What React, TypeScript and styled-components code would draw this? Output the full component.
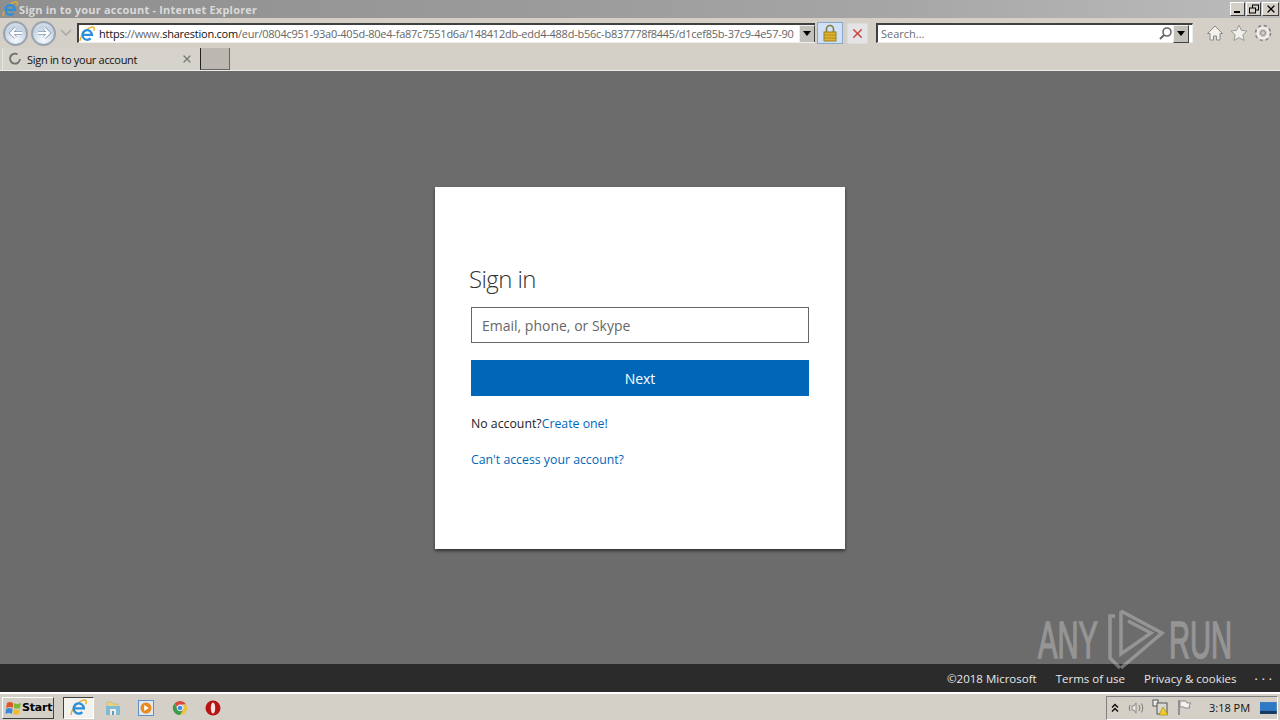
import React from 'react';
import styled, { createGlobalStyle } from 'styled-components';
import { X } from 'lucide-react';

const GlobalStyle = createGlobalStyle`
  html, body { margin: 0; padding: 0; width: 1280px; height: 720px; overflow: hidden; }
  body { font-family: "Open Sans", "Liberation Sans", sans-serif; }
`;

const Screen = styled.div`
  position: relative;
  display: flex;
  flex-direction: column;
  width: 1280px;
  height: 720px;
  background: #d4d0c8;
`;

const TitleBar = styled.div`
  display: flex;
  align-items: center;
  height: 18px;
  padding: 0 1px 0 2px;
  background: linear-gradient(90deg, #8f8f8f 0%, #9a9a9a 40%, #a6a6a6 70%, #bcbcbc 100%);
`;

const TitleText = styled.span`
  margin-left: 1px;
  flex: 1;
  font: bold 11px "Open Sans", sans-serif;
  letter-spacing: 0.2px;
  color: #dadada;
  white-space: nowrap;
`;

const WindowButton = styled.div<{ $wide?: boolean }>`
  display: flex;
  align-items: center;
  justify-content: center;
  box-sizing: border-box;
  width: ${p => (p.$wide ? 17 : 15)}px;
  height: 14px;
  margin-left: 1px;
  background: #d4d0c8;
  border: 1px solid;
  border-color: #fff #404040 #404040 #fff;
`;

const AddressRow = styled.div`
  display: flex;
  align-items: center;
  height: 30px;
  background: #d4d0c8;
  padding-left: 3px;
`;

const NavButton = styled.div`
  display: flex;
  align-items: center;
  justify-content: center;
  box-sizing: border-box;
  width: 25px;
  height: 25px;
  margin-right: 3px;
  border-radius: 50%;
  border: 2px solid #9aa4b0;
  background: radial-gradient(circle at 50% 80%, #f6fafd 0%, #c4d2e2 65%, #e6ebf1 100%);
`;

const NavChevron = styled.svg`
  margin-left: 1px;
`;

const AddressBox = styled.div`
  display: flex;
  align-items: center;
  box-sizing: border-box;
  width: 738px;
  height: 20px;
  margin-left: 5px;
  background: #fff;
  border-top: 2px solid #404040;
  border-left: 2px solid #404040;
  border-bottom: 1px solid #eee;
  overflow: hidden;
`;

const Url = styled.div`
  margin-left: 4px;
  flex: 1;
  font: 11px "Open Sans", sans-serif;
  letter-spacing: -0.235px;
  color: #666;
  white-space: nowrap;
  overflow: hidden;
`;

const UrlStrong = styled.span`
  color: #111;
`;

const Dropdown = styled.div`
  display: flex;
  align-items: center;
  justify-content: center;
  box-sizing: border-box;
  flex: none;
  width: 16px;
  height: 18px;
  background: #c4c0ba;
  border: 1px solid;
  border-color: #eee #404040 #404040 #eee;

  &::after {
    content: '';
    border-left: 4px solid transparent;
    border-right: 4px solid transparent;
    border-top: 5px solid #000;
  }
`;

const LockButton = styled.div`
  display: flex;
  align-items: center;
  justify-content: center;
  box-sizing: border-box;
  width: 26px;
  height: 22px;
  margin-left: 2px;
  background: #cfe0f7;
  border: 1px solid #8aa8cc;
`;

const StopButton = styled.div`
  display: flex;
  align-items: center;
  justify-content: center;
  box-sizing: border-box;
  width: 21px;
  height: 21px;
  margin-left: 4px;
  border-radius: 2px;
  background: #e6e3e6;
  border: 1px solid #ddd;
`;

const SearchBox = styled.div`
  display: flex;
  align-items: center;
  box-sizing: border-box;
  width: 317px;
  height: 20px;
  margin-left: 8px;
  padding: 0 3px 0 3px;
  background: #fff;
  border-top: 2px solid #404040;
  border-left: 2px solid #404040;
  border-bottom: 1px solid #eee;
  border-right: 1px solid #eee;
`;

const SearchText = styled.span`
  flex: 1;
  font: 11px "Open Sans", sans-serif;
  color: #6d6d6d;
`;

const ToolIcons = styled.div`
  display: flex;
  align-items: center;
  gap: 6px;
  margin-left: 13px;
`;

const TabRow = styled.div`
  display: flex;
  align-items: stretch;
  height: 23px;
  box-sizing: border-box;
  padding-left: 2px;
  background: #d4d0c8;
  border-bottom: 1px solid #eeeae4;
`;

const Tab = styled.div`
  display: flex;
  align-items: center;
  box-sizing: border-box;
  width: 198px;
  padding: 0 7px 0 5px;
  background: #d6d2cc;
  border-left: 1px solid #e8e6e0;
`;

const TabLabel = styled.span`
  flex: 1;
  margin-left: 5px;
  font: 11px "Open Sans", sans-serif;
  letter-spacing: -0.3px;
  color: #111;
  white-space: nowrap;
`;

const NewTab = styled.div`
  box-sizing: border-box;
  width: 30px;
  height: 22px;
  background: #bdb7b2;
  border: 1px solid #333;
  border-top: none;
  border-left-color: #222;
  border-right-color: #666;
  border-bottom-color: #666;
`;

const Page = styled.main`
  flex: 1;
  display: flex;
  align-items: center;
  justify-content: center;
  padding-top: 1px;
  background: #6c6c6c;
`;

const Card = styled.section`
  box-sizing: border-box;
  width: 410px;
  height: 362px;
  padding: 75px 36px 0;
  background: #fff;
  box-shadow: 0 2px 3px rgba(0, 0, 0, 0.55);
`;

const Heading = styled.h1`
  margin: 0 0 11px -2px;
  height: 34px;
  font: 300 24px/34px "Open Sans", sans-serif;
  letter-spacing: -0.6px;
  color: #333;
`;

const FakeInput = styled.div`
  display: flex;
  align-items: center;
  box-sizing: border-box;
  height: 36px;
  padding-left: 10px;
  border: 1px solid #666;
  font-size: 14px;
  color: #666;
`;

const NextButton = styled.div`
  display: flex;
  align-items: center;
  justify-content: center;
  height: 36px;
  margin-top: 17px;
  background: #0067b8;
  color: #fff;
  font-size: 14px;
`;

const Line = styled.div<{ $top: number }>`
  margin-top: ${p => p.$top}px;
  height: 18px;
  font-size: 12.3px;
  line-height: 18px;
  color: #222;
  white-space: nowrap;
`;

const Link = styled.span`
  color: #0067b8;
`;

const Footer = styled.footer`
  display: flex;
  align-items: center;
  justify-content: flex-end;
  height: 28px;
  padding-right: 4px;
  background: #2b2b2b;
  color: #e8e8e8;
  font-size: 11.5px;
`;

const FooterItem = styled.span`
  margin-left: 19px;
  white-space: nowrap;
`;

const FooterMore = styled.span`
  margin-left: 18px;
  letter-spacing: 4px;
  font-weight: 600;
  transform: translateY(-3px);
`;

const Taskbar = styled.div`
  display: flex;
  align-items: center;
  box-sizing: border-box;
  height: 28px;
  padding: 2px 0 0 2px;
  border-top: 1px solid #fff;
  background: #d4d0c8;
  box-shadow: inset 0 1px 0 #fff;
`;

const StartButton = styled.div`
  display: flex;
  align-items: center;
  box-sizing: border-box;
  width: 52px;
  height: 22px;
  padding-left: 2px;
  background: #d4d0c8;
  border: 1px solid;
  border-color: #fff #404040 #404040 #fff;
  font: bold 11px "DejaVu Sans", sans-serif;
  letter-spacing: -0.2px;
  color: #000;
`;

const ActiveTask = styled.div`
  display: flex;
  align-items: center;
  justify-content: center;
  box-sizing: border-box;
  width: 31px;
  height: 22px;
  margin: 0 2px 0 9px;
  background: #f4f2ee;
  border: 1px solid;
  border-color: #404040 #fff #fff #404040;
`;

const TaskIcon = styled.div`
  display: flex;
  align-items: center;
  justify-content: center;
  width: 33.5px;
  height: 22px;
`;

const Tray = styled.div`
  display: flex;
  align-items: center;
  box-sizing: border-box;
  height: 24px;
  width: 172px;
  margin-left: auto;
  margin-right: 2px;
  padding-left: 3px;
  border: 1px solid;
  border-color: #808080 #fff #fff #808080;
`;

const TrayIcons = styled.div`
  display: flex;
  align-items: center;
  gap: 8px;
`;

const Clock = styled.span`
  margin-left: 16px;
  width: 52px;
  font: 11px "Open Sans", sans-serif;
  color: #111;
`;

const Watermark = styled.div`
  position: absolute;
  right: 50px;
  bottom: 48px;
  display: flex;
  align-items: center;
  height: 64px;
  color: #c8c8c8;
  opacity: 0.45;
  pointer-events: none;
`;

const WatermarkWord = styled.span`
  display: inline-block;
  width: 61px;
  font: 52px/64px "Liberation Sans", sans-serif;
  -webkit-text-stroke: 1.5px #c8c8c8;
  transform: scaleX(0.56);
  transform-origin: left center;
  white-space: nowrap;
`;

const WatermarkLogo = styled.svg`
  margin: 0 2px 0 8px;
`;

const IeIcon = ({ size = 16 }: { size?: number }) => (
  <svg width={size} height={size} viewBox="0 0 16 16" fill="none">
    <path d="M1 15C1.5 9 8 1.5 14 .8c1.6 0 1.6 2.2 .8 4" stroke="#e8b020" strokeWidth="1.3" />
    <path d="M4.4 8.8H13A4.8 4.8 0 1 0 11.6 12.4" stroke="#2a8fdc" strokeWidth="2.2" />
  </svg>
);

const NavArrow = ({ back }: { back?: boolean }) => (
  <svg width="16" height="14" viewBox="0 0 16 14" fill="none" style={back ? undefined : { transform: 'scaleX(-1)' }}>
    <path d="M14 7H3M7.5 2.5L3 7l4.5 4.5" stroke="#8a9db2" strokeWidth="3.6" />
    <path d="M14 7H3M7.5 2.5L3 7l4.5 4.5" stroke="#fff" strokeWidth="2" />
  </svg>
);

const Lock = () => (
  <svg width="16" height="18" viewBox="0 0 16 18" fill="none">
    <path d="M4.5 8V5a3.5 3.5 0 0 1 7 0v3" stroke="#8a7a38" strokeWidth="1.6" />
    <rect x="2" y="8" width="12" height="9" fill="#e0b52c" stroke="#9a7d20" />
    <path d="M2 11h12M2 14h12" stroke="#a98a26" />
  </svg>
);

const Search = () => (
  <svg width="15" height="15" viewBox="0 0 15 15" fill="none">
    <circle cx="9" cy="6" r="4" stroke="#666" strokeWidth="1.6" />
    <path d="M6 9l-4 4" stroke="#666" strokeWidth="2" />
  </svg>
);

const Home = () => (
  <svg width="18" height="18" viewBox="0 0 18 18">
    <path d="M9 2L1.5 9.5h2.500V16h3.500v-4h3v4H14V9.500h2.500z" fill="#f2f0ec" stroke="#8a8a86" />
  </svg>
);

const Star = () => (
  <svg width="18" height="18" viewBox="0 0 18 18">
    <path d="M9 1l2.4 5.4 5.6.6-4.2 3.8 1.2 5.7L9 13.7l-5 2.8 1.2-5.7L1 7l5.6-.6z" fill="#f2f0ec" stroke="#9a9a96" />
  </svg>
);

const Gear = () => (
  <svg width="18" height="18" viewBox="0 0 18 18" fill="none">
    <circle cx="9" cy="9" r="6.5" stroke="#8a8a86" strokeWidth="3.6" strokeDasharray="2.6 2.5" />
    <circle cx="9" cy="9" r="5.4" stroke="#f2f0ec" strokeWidth="2.4" />
    <circle cx="9" cy="9" r="2.4" stroke="#8a8a86" />
  </svg>
);

const Spinner = () => (
  <svg width="14" height="14" viewBox="0 0 14 14" fill="none">
    <path d="M9.5 2.3A5 5 0 1 0 12 7" stroke="#6f6f6f" strokeWidth="1.8" />
  </svg>
);

const WinFlag = () => (
  <svg width="17" height="16" viewBox="0 0 17 16">
    <path d="M2 3c2-1.4 4-1.4 6 0v5C6 6.6 4 6.6 1 8z" fill="#e0562a" />
    <path d="M9 3c2 1.2 4 1.2 7 0l-1 5c-2 1-4 1-6 0z" fill="#7cb83a" />
    <path d="M1 9c2-1.4 4-1.4 6.6 0l-.6 5c-2-1.4-4-1.4-6.5 0z" fill="#3a86d8" />
    <path d="M9 9c2 1.2 4 1.2 6 0l-1 5c-2 1-3.6 1-5.6 0z" fill="#eebb2c" />
  </svg>
);

const Folder = () => (
  <svg width="16" height="16" viewBox="0 0 16 16">
    <path d="M2 2h5l1 2h5v3H2z" fill="#e6d27e" stroke="#b8a868" strokeWidth=".5" />
    <rect x="1" y="6" width="14" height="9" fill="#7fbad6" />
    <rect x="5" y="9" width="6" height="6" fill="#f0ece0" />
    <rect x="7" y="11" width="2" height="4" fill="#5f9cbc" />
  </svg>
);

const Media = () => (
  <svg width="16" height="16" viewBox="0 0 16 16">
    <rect x=".5" y=".5" width="15" height="15" fill="#dfe8f2" stroke="#5f8fc4" />
    <circle cx="8" cy="8" r="5.5" fill="#e88a1e" />
    <path d="M6.2 5l4.600 3-4.600 3z" fill="#fff" />
  </svg>
);

const Chrome = () => (
  <svg width="16" height="16" viewBox="0 0 16 16">
    <path d="M8 1a7 7 0 0 1 6.1 3.5H8A3.5 3.5 0 0 0 4.8 6.7L2.5 3.5A7 7 0 0 1 8 1z" fill="#d9483b" />
    <path d="M14.1 4.5A7 7 0 0 1 8 15l3-5a3.5 3.5 0 0 0 0-5.500z" fill="#f2c230" />
    <path d="M2.5 3.5L5 8a3.5 3.5 0 0 0 6 2l-3 5A7 7 0 0 1 2.5 3.5z" fill="#3d9a4a" />
    <circle cx="8" cy="8" r="2.8" fill="#4a8ae0" stroke="#fff" strokeWidth=".8" />
  </svg>
);

const Opera = () => (
  <svg width="16" height="16" viewBox="0 0 16 16">
    <circle cx="8" cy="8" r="7.5" fill="#b81212" />
    <ellipse cx="8" cy="8" rx="2.2" ry="5.5" fill="#f6e6e6" />
  </svg>
);

const Speaker = () => (
  <svg width="16" height="16" viewBox="0 0 16 16" fill="none">
    <path d="M4 6h2l2-3v10l-2-3H4z" fill="#f2f0ec" stroke="#8a8a86" />
    <path d="M11 5c1 2 1 4 0 6M13.5 3.5c1.6 3 1.6 6 0 9M2 5c-1 2-1 4 0 6" stroke="#7a7a76" />
  </svg>
);

const Network = () => (
  <svg width="17" height="17" viewBox="0 0 17 17" fill="none">
    <rect x="1" y="1" width="5" height="6" stroke="#555" fill="#eee" />
    <rect x="5" y="4" width="10" height="11" stroke="#555" fill="#d8d8d0" />
    <path d="M11 8l5 8h-9z" fill="#f2cc20" stroke="#9a8420" strokeWidth=".6" />
  </svg>
);

const TrayFlag = () => (
  <svg width="16" height="17" viewBox="0 0 16 17" fill="none">
    <path d="M2 1v15" stroke="#777" strokeWidth="1.4" />
    <path d="M3 2h6l1 2h4l-2 3 1 2H8L7 8H3z" fill="#f4f2ee" stroke="#8a8a86" />
  </svg>
);

const ShowDesktop = () => (
  <svg width="17" height="14" viewBox="0 0 17 14">
    <rect width="17" height="12" y="1" fill="#2f78c4" />
    <rect width="17" height="3" y="10" fill="#15395f" />
  </svg>
);

const TrayArrows = () => (
  <svg width="10" height="10" viewBox="0 0 10 10" fill="none" stroke="#111" strokeWidth="1.5">
    <path d="M2 4.500L5 1.500l3 3M2 8.500l3-3 3 3" />
  </svg>
);

const WatermarkMark = () => (
  <WatermarkLogo width="60" height="64" viewBox="0 0 60 64" fill="none" stroke="#c8c8c8" strokeWidth="3.5">
    <path d="M8 8H3V50L13 60" />
    <path d="M14 3L55 25L14 60" />
    <path d="M14 3V46L44 25L21 13" />
  </WatermarkLogo>
);

export default function App() {
  return (
    <Screen>
      <GlobalStyle />
      <TitleBar>
        <IeIcon />
        <TitleText>Sign in to your account - Internet Explorer</TitleText>
        <WindowButton>
          <svg width="10" height="10" viewBox="0 0 10 10"><rect x="1" y="7" width="6" height="2" fill="#000" /></svg>
        </WindowButton>
        <WindowButton>
          <svg width="10" height="10" viewBox="0 0 10 10" fill="none" stroke="#000">
            <rect x="3.5" y="1" width="6" height="5" />
            <rect x="0.5" y="4" width="6" height="5" fill="#d4d0c8" />
          </svg>
        </WindowButton>
        <WindowButton $wide>
          <X size={12} strokeWidth={2.5} color="#000" />
        </WindowButton>
      </TitleBar>

      <AddressRow>
        <NavButton><NavArrow back /></NavButton>
        <NavButton><NavArrow /></NavButton>
        <NavChevron width="12" height="8" viewBox="0 0 12 8">
          <path d="M1 1l5 5 5-5" fill="none" stroke="#a8a8a4" strokeWidth="1.5" />
        </NavChevron>
        <AddressBox>
          <IeIcon />
          <Url>
            <UrlStrong>https</UrlStrong>://www.<UrlStrong>sharestion.com</UrlStrong>/eur/0804c951-93a0-405d-80e4-fa87c7551d6a/148412db-edd4-488d-b56c-b837778f8445/d1cef85b-37c9-4e57-90
          </Url>
          <Dropdown />
        </AddressBox>
        <LockButton><Lock /></LockButton>
        <StopButton><X size={15} strokeWidth={2.5} color="#c84a4a" /></StopButton>
        <SearchBox>
          <SearchText>Search...</SearchText>
          <Search />
          <Dropdown />
        </SearchBox>
        <ToolIcons>
          <Home />
          <Star />
          <Gear />
        </ToolIcons>
      </AddressRow>

      <TabRow>
        <Tab>
          <Spinner />
          <TabLabel>Sign in to your account</TabLabel>
          <X size={12} strokeWidth={2.5} color="#777" />
        </Tab>
        <NewTab />
      </TabRow>

      <Page>
        <Card>
          <Heading>Sign in</Heading>
          <FakeInput>Email, phone, or Skype</FakeInput>
          <NextButton>Next</NextButton>
          <Line $top={19}>No account?<Link>Create one!</Link></Line>
          <Line $top={18}><Link>Can't access your account?</Link></Line>
        </Card>
      </Page>

      <Footer>
        <FooterItem>©2018 Microsoft</FooterItem>
        <FooterItem>Terms of use</FooterItem>
        <FooterItem>Privacy &amp; cookies</FooterItem>
        <FooterMore>...</FooterMore>
      </Footer>

      <Taskbar>
        <StartButton><WinFlag />Start</StartButton>
        <ActiveTask><IeIcon size={17} /></ActiveTask>
        <TaskIcon><Folder /></TaskIcon>
        <TaskIcon><Media /></TaskIcon>
        <TaskIcon><Chrome /></TaskIcon>
        <TaskIcon><Opera /></TaskIcon>
        <Tray>
          <TrayIcons>
            <TrayArrows />
            <Speaker />
            <Network />
            <TrayFlag />
          </TrayIcons>
          <Clock>3:18 PM</Clock>
          <ShowDesktop />
        </Tray>
      </Taskbar>

      <Watermark>
        <WatermarkWord>ANY</WatermarkWord>
        <WatermarkMark />
        <WatermarkWord>RUN</WatermarkWord>
      </Watermark>
    </Screen>
  );
}
